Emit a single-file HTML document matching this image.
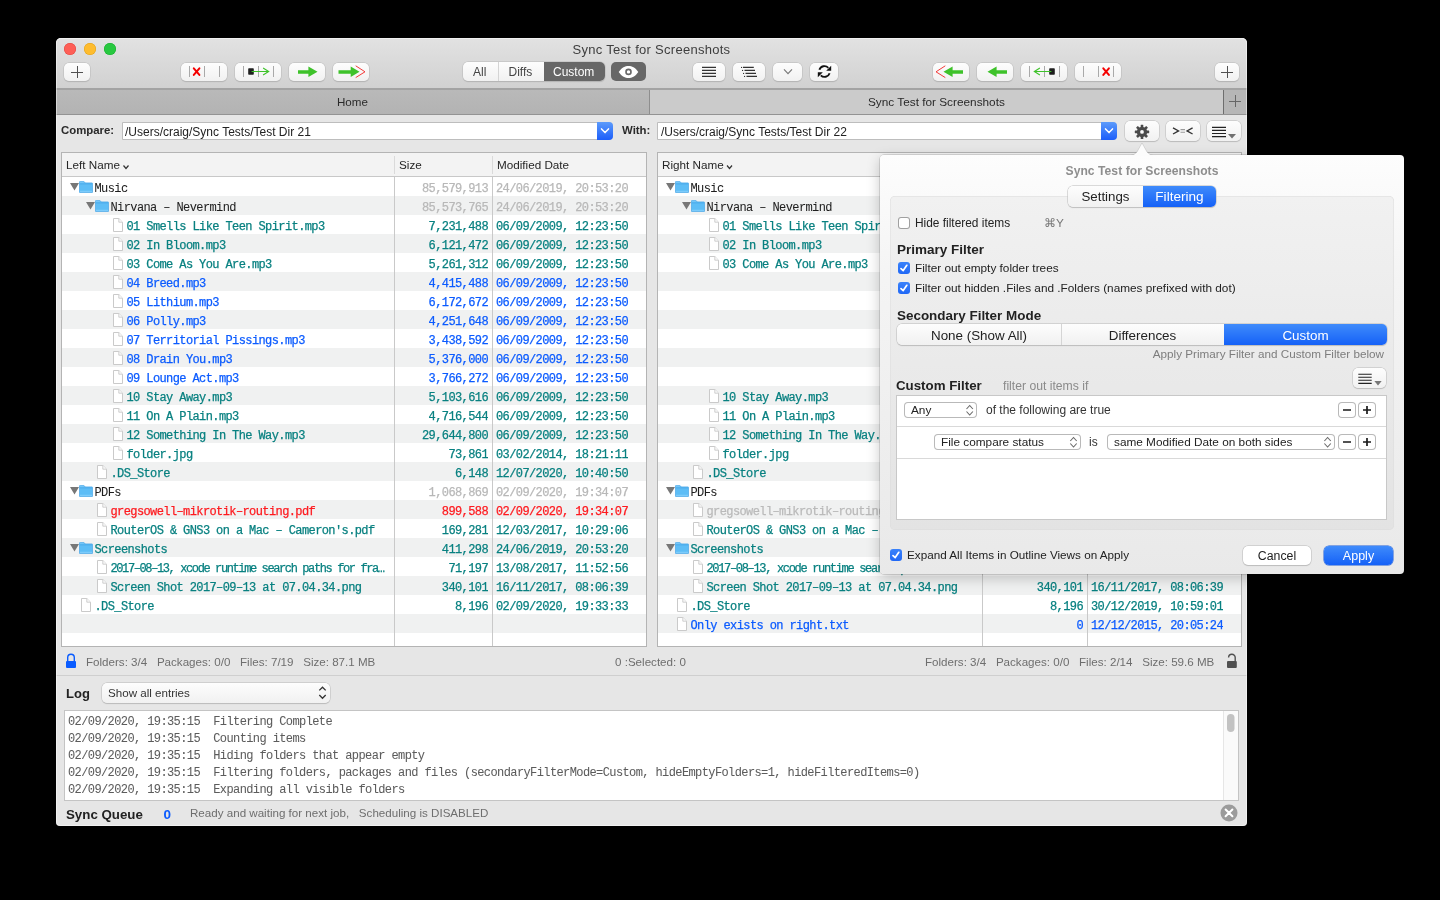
<!DOCTYPE html>
<html><head><meta charset="utf-8">
<style>
*{box-sizing:border-box;margin:0;padding:0}
html,body{width:1440px;height:900px;background:#000;overflow:hidden;font-family:"Liberation Sans",sans-serif;color:#222}
.a{position:absolute}
i{display:block;position:absolute;font-style:normal}
#win{position:absolute;left:56px;top:38px;width:1191px;height:788px;background:#e6e6e6;border-radius:5px 5px 4px 4px;overflow:hidden}
#tb{position:absolute;left:0;top:0;width:1191px;height:50px;background:linear-gradient(#e2e2e2,#d1d1d1)}
#tbline{position:absolute;left:0;top:50px;width:1191px;height:2px;background:#a3a3a3}
#tabs{position:absolute;left:0;top:52px;width:1191px;height:25px;background:#cbcbcb;border-bottom:1px solid #939393}
.tl{position:absolute;top:5px;width:12px;height:12px;border-radius:50%}
.title{position:absolute;left:0;width:1191px;top:3px;text-align:center;font-size:13px;letter-spacing:0.28px;color:#3e3e3e}
.btn{position:absolute;height:19px;border-radius:5px;background:linear-gradient(#fdfdfd,#f1f1f1);box-shadow:0 0 0 0.5px #bcbcbc,0 0.5px 1px rgba(0,0,0,0.18)}
.tbl{position:absolute;top:152px;height:495px;background:#fff;border:1px solid #b4b4b4;overflow:hidden}
.th{position:absolute;left:0;top:0;width:100%;height:24px;background:#f3f3f3;border-bottom:1px solid #c8c8c8}
.thl{position:absolute;top:4.5px;font-size:11.7px;color:#262626;white-space:nowrap}
.chev{font-size:10px;position:relative;top:1px}
.cdiv{top:3px;width:1px;height:18px;background:#dadada}
.tb{position:absolute;left:0;top:24px;width:100%;height:480px}
.row{position:absolute;left:0;width:100%;height:19px}
.vdiv{top:0;width:1px;height:480px;background:#c9c9c9}
.ico{position:absolute;line-height:0}
.nm{position:absolute;font-family:"Liberation Mono",monospace;font-size:12px;letter-spacing:-0.6px;line-height:19px;height:19px;white-space:nowrap;overflow:hidden;padding-top:2.5px;-webkit-text-stroke:0.25px}
.sz{text-align:right}
.st{position:absolute;font-size:11.6px;color:#6e6e6e;white-space:nowrap}
.chk{width:12px;height:12px;border-radius:3px;background:linear-gradient(#3a82fa,#2068f6);line-height:0}
.pop{background:#fff;border-radius:4px;box-shadow:inset 0 0 0 1px #b9b9b9}
.lbl{position:absolute;font-weight:bold;white-space:nowrap}
</style></head><body><div id="root" style="position:absolute;left:0;top:0;width:1440px;height:900px;will-change:transform">
<div id="win">
  <div id="tb"></div>
  <div id="tbline"></div>
  <div id="tabs">
    <div class="a" style="left:0;top:0;width:594px;height:24px;background:linear-gradient(#b9b9b9,#b3b3b3);border-right:1px solid #8e8e8e"></div>
    <div class="a" style="left:1167px;top:0;width:24px;height:24px;background:#b6b6b6;border-left:1px solid #6e6e6e"></div>
  </div>
</div>
<!-- traffic lights -->
<i class="tl" style="left:64px;top:43px;background:#fe5f57;box-shadow:inset 0 0 0 0.5px #e2463f"></i>
<i class="tl" style="left:84px;top:43px;background:#febc2e;box-shadow:inset 0 0 0 0.5px #e1a116"></i>
<i class="tl" style="left:104px;top:43px;background:#28c840;box-shadow:inset 0 0 0 0.5px #14ae2a"></i>
<div class="title" style="left:56px;top:42px">Sync Test for Screenshots</div>

<!-- toolbar buttons -->
<div class="btn" style="left:64px;top:63px;width:26px;height:18px"></div>
<div class="a" style="left:71px;top:71.5px;width:12px;height:1px;background:#505050"></div>
<div class="a" style="left:76.5px;top:66px;width:1px;height:12px;background:#505050"></div>

<div class="btn" style="left:181px;top:63px;width:46px;height:18px"></div>
<div class="btn" style="left:235px;top:63px;width:46px;height:18px"></div>
<div class="btn" style="left:289px;top:63px;width:36px;height:18px"></div>
<div class="btn" style="left:333px;top:63px;width:36px;height:18px"></div>

<div class="btn" style="left:933px;top:63px;width:36px;height:18px"></div>
<div class="btn" style="left:977px;top:63px;width:36px;height:18px"></div>
<div class="btn" style="left:1021px;top:63px;width:46px;height:18px"></div>
<div class="btn" style="left:1075px;top:63px;width:46px;height:18px"></div>

<div class="btn" style="left:1215px;top:63px;width:24px;height:18px"></div>
<div class="a" style="left:1221px;top:71.5px;width:12px;height:1px;background:#505050"></div>
<div class="a" style="left:1226.5px;top:66px;width:1px;height:12px;background:#505050"></div>

<!-- segmented -->
<div class="btn" style="left:463px;top:62px;width:142px;height:19px;overflow:hidden">
  <div class="a" style="left:35px;top:0;width:1px;height:19px;background:#d4d4d4"></div>
  <div class="a" style="left:81px;top:0;width:61px;height:19px;background:#676767"></div>
  <span class="a" style="left:10px;top:3px;font-size:12px;color:#444">All</span>
  <span class="a" style="left:45.5px;top:3px;font-size:12px;color:#444">Diffs</span>
  <span class="a" style="left:90px;top:3px;font-size:12px;color:#fff">Custom</span>
</div>
<div class="btn" style="left:611px;top:62px;width:35px;height:19px;background:#676767;box-shadow:none"></div>

<div class="btn" style="left:693px;top:63px;width:32px;height:18px"></div>
<div class="btn" style="left:733px;top:63px;width:32px;height:18px"></div>
<div class="btn" style="left:773px;top:63px;width:29px;height:18px"></div>
<div class="btn" style="left:810px;top:63px;width:28px;height:18px"></div>

<!-- tab labels -->
<span class="a" style="left:337px;top:95px;font-size:11.6px;color:#2a2a2a">Home</span>
<span class="a" style="left:868px;top:95px;font-size:11.8px;color:#2a2a2a">Sync Test for Screenshots</span>
<div class="a" style="left:1229px;top:101px;width:12px;height:1.2px;background:#666"></div>
<div class="a" style="left:1234.9px;top:95px;width:1.2px;height:12px;background:#666"></div>

<!-- compare row -->
<span class="lbl" style="left:61px;top:124px;font-size:11.4px;color:#2a2a2a">Compare:</span>
<div class="a" style="left:122px;top:122px;width:491px;height:18px;background:#fff;border:1px solid #bdbdbd;border-radius:0 4px 4px 0"></div>
<span class="a" style="left:125px;top:125px;font-size:12px;color:#222">/Users/craig/Sync Tests/Test Dir 21</span>
<div class="a" style="left:597px;top:122px;width:16px;height:18px;background:linear-gradient(#5c9bfb,#1c5efa);border-radius:0 4px 4px 0"></div>

<span class="lbl" style="left:622px;top:124px;font-size:11.4px;color:#2a2a2a">With:</span>
<div class="a" style="left:657px;top:122px;width:460px;height:18px;background:#fff;border:1px solid #bdbdbd;border-radius:0 4px 4px 0"></div>
<span class="a" style="left:661px;top:125px;font-size:12px;color:#222">/Users/craig/Sync Tests/Test Dir 22</span>
<div class="a" style="left:1101px;top:122px;width:16px;height:18px;background:linear-gradient(#5c9bfb,#1c5efa);border-radius:0 4px 4px 0"></div>

<div class="btn" style="left:1125px;top:121px;width:34px;height:20px"></div>
<div class="btn" style="left:1166px;top:121px;width:34px;height:20px"></div>
<div class="btn" style="left:1207px;top:121px;width:34px;height:20px"></div>

<div class="tbl" style="left:61px;width:586px">
<div class="th"><span class="thl" style="left:4px">Left Name</span><i class="cdiv" style="left:332px"></i><span class="thl" style="left:337px">Size</span><i class="cdiv" style="left:430px"></i><span class="thl" style="left:435px">Modified Date</span></div>
<div class="tb">
<div class="row" style="top:0px;background:#ffffff"></div>
<div class="row" style="top:19px;background:#f0f1f1"></div>
<div class="row" style="top:38px;background:#ffffff"></div>
<div class="row" style="top:57px;background:#f0f1f1"></div>
<div class="row" style="top:76px;background:#ffffff"></div>
<div class="row" style="top:95px;background:#f0f1f1"></div>
<div class="row" style="top:114px;background:#ffffff"></div>
<div class="row" style="top:133px;background:#f0f1f1"></div>
<div class="row" style="top:152px;background:#ffffff"></div>
<div class="row" style="top:171px;background:#f0f1f1"></div>
<div class="row" style="top:190px;background:#ffffff"></div>
<div class="row" style="top:209px;background:#f0f1f1"></div>
<div class="row" style="top:228px;background:#ffffff"></div>
<div class="row" style="top:247px;background:#f0f1f1"></div>
<div class="row" style="top:266px;background:#ffffff"></div>
<div class="row" style="top:285px;background:#f0f1f1"></div>
<div class="row" style="top:304px;background:#ffffff"></div>
<div class="row" style="top:323px;background:#f0f1f1"></div>
<div class="row" style="top:342px;background:#ffffff"></div>
<div class="row" style="top:361px;background:#f0f1f1"></div>
<div class="row" style="top:380px;background:#ffffff"></div>
<div class="row" style="top:399px;background:#f0f1f1"></div>
<div class="row" style="top:418px;background:#ffffff"></div>
<div class="row" style="top:437px;background:#f0f1f1"></div>
<div class="row" style="top:456px;background:#ffffff"></div>
<i class="vdiv" style="left:332px"></i><i class="vdiv" style="left:430px"></i>
<span class="ico" style="left:7.5px;top:6px"><svg width="9" height="8" viewBox="0 0 9 8"><path d="M0 0 L9 0 L4.5 7.5 Z" fill="#777"/></svg></span>
<span class="ico" style="left:16.5px;top:4px"><svg width="14" height="12" viewBox="0 0 14 12"><path d="M0.4 1.2 Q0.4 0.4 1.2 0.4 L4.6 0.4 Q5.1 0.4 5.5 1 L6 1.9 L13 1.9 Q13.6 1.9 13.6 2.6 L13.6 11 Q13.6 11.6 13 11.6 L1 11.6 Q0.4 11.6 0.4 11 Z" fill="#5dbdf6" stroke="#47a5e6" stroke-width="0.7"/><path d="M0.9 2.9 L13.1 2.9" stroke="#4aa8e8" stroke-width="0.8"/><path d="M1 1.3 L4.8 1.3" stroke="#8fd0fa" stroke-width="0.6"/><path d="M0.9 10.3 L13.1 10.3" stroke="#8ad3fd" stroke-width="0.9"/></svg></span>
<span class="nm" style="left:32.5px;top:0px;color:#1e1e1e;width:297.5px;-webkit-text-stroke:0.05px">Music</span>
<span class="nm sz" style="left:332px;width:94px;top:0px;color:#b8b8b8">85,579,913</span>
<span class="nm" style="left:434px;top:0px;color:#b8b8b8">24/06/2019, 20:53:20</span>
<span class="ico" style="left:23.5px;top:25px"><svg width="9" height="8" viewBox="0 0 9 8"><path d="M0 0 L9 0 L4.5 7.5 Z" fill="#777"/></svg></span>
<span class="ico" style="left:32.5px;top:23px"><svg width="14" height="12" viewBox="0 0 14 12"><path d="M0.4 1.2 Q0.4 0.4 1.2 0.4 L4.6 0.4 Q5.1 0.4 5.5 1 L6 1.9 L13 1.9 Q13.6 1.9 13.6 2.6 L13.6 11 Q13.6 11.6 13 11.6 L1 11.6 Q0.4 11.6 0.4 11 Z" fill="#5dbdf6" stroke="#47a5e6" stroke-width="0.7"/><path d="M0.9 2.9 L13.1 2.9" stroke="#4aa8e8" stroke-width="0.8"/><path d="M1 1.3 L4.8 1.3" stroke="#8fd0fa" stroke-width="0.6"/><path d="M0.9 10.3 L13.1 10.3" stroke="#8ad3fd" stroke-width="0.9"/></svg></span>
<span class="nm" style="left:48.5px;top:19px;color:#1e1e1e;width:281.5px;-webkit-text-stroke:0.05px">Nirvana – Nevermind</span>
<span class="nm sz" style="left:332px;width:94px;top:19px;color:#b8b8b8">85,573,765</span>
<span class="nm" style="left:434px;top:19px;color:#b8b8b8">24/06/2019, 20:53:20</span>
<span class="ico" style="left:50.5px;top:40.5px"><svg width="10" height="14" viewBox="0 0 10 14"><path d="M0.5 0.5 L5.8 0.5 L9.5 4.2 L9.5 13.5 L0.5 13.5 Z" fill="#fff" stroke="#c4c4c4" stroke-width="0.9"/><path d="M5.8 0.5 L5.8 4.2 L9.5 4.2" fill="#fafafa" stroke="#c4c4c4" stroke-width="0.8"/></svg></span>
<span class="nm" style="left:64.5px;top:38px;color:#088080;width:265.5px">01 Smells Like Teen Spirit.mp3</span>
<span class="nm sz" style="left:332px;width:94px;top:38px;color:#088080">7,231,488</span>
<span class="nm" style="left:434px;top:38px;color:#088080">06/09/2009, 12:23:50</span>
<span class="ico" style="left:50.5px;top:59.5px"><svg width="10" height="14" viewBox="0 0 10 14"><path d="M0.5 0.5 L5.8 0.5 L9.5 4.2 L9.5 13.5 L0.5 13.5 Z" fill="#fff" stroke="#c4c4c4" stroke-width="0.9"/><path d="M5.8 0.5 L5.8 4.2 L9.5 4.2" fill="#fafafa" stroke="#c4c4c4" stroke-width="0.8"/></svg></span>
<span class="nm" style="left:64.5px;top:57px;color:#088080;width:265.5px">02 In Bloom.mp3</span>
<span class="nm sz" style="left:332px;width:94px;top:57px;color:#088080">6,121,472</span>
<span class="nm" style="left:434px;top:57px;color:#088080">06/09/2009, 12:23:50</span>
<span class="ico" style="left:50.5px;top:78.5px"><svg width="10" height="14" viewBox="0 0 10 14"><path d="M0.5 0.5 L5.8 0.5 L9.5 4.2 L9.5 13.5 L0.5 13.5 Z" fill="#fff" stroke="#c4c4c4" stroke-width="0.9"/><path d="M5.8 0.5 L5.8 4.2 L9.5 4.2" fill="#fafafa" stroke="#c4c4c4" stroke-width="0.8"/></svg></span>
<span class="nm" style="left:64.5px;top:76px;color:#088080;width:265.5px">03 Come As You Are.mp3</span>
<span class="nm sz" style="left:332px;width:94px;top:76px;color:#088080">5,261,312</span>
<span class="nm" style="left:434px;top:76px;color:#088080">06/09/2009, 12:23:50</span>
<span class="ico" style="left:50.5px;top:97.5px"><svg width="10" height="14" viewBox="0 0 10 14"><path d="M0.5 0.5 L5.8 0.5 L9.5 4.2 L9.5 13.5 L0.5 13.5 Z" fill="#fff" stroke="#c4c4c4" stroke-width="0.9"/><path d="M5.8 0.5 L5.8 4.2 L9.5 4.2" fill="#fafafa" stroke="#c4c4c4" stroke-width="0.8"/></svg></span>
<span class="nm" style="left:64.5px;top:95px;color:#0b5bff;width:265.5px">04 Breed.mp3</span>
<span class="nm sz" style="left:332px;width:94px;top:95px;color:#0b5bff">4,415,488</span>
<span class="nm" style="left:434px;top:95px;color:#0b5bff">06/09/2009, 12:23:50</span>
<span class="ico" style="left:50.5px;top:116.5px"><svg width="10" height="14" viewBox="0 0 10 14"><path d="M0.5 0.5 L5.8 0.5 L9.5 4.2 L9.5 13.5 L0.5 13.5 Z" fill="#fff" stroke="#c4c4c4" stroke-width="0.9"/><path d="M5.8 0.5 L5.8 4.2 L9.5 4.2" fill="#fafafa" stroke="#c4c4c4" stroke-width="0.8"/></svg></span>
<span class="nm" style="left:64.5px;top:114px;color:#0b5bff;width:265.5px">05 Lithium.mp3</span>
<span class="nm sz" style="left:332px;width:94px;top:114px;color:#0b5bff">6,172,672</span>
<span class="nm" style="left:434px;top:114px;color:#0b5bff">06/09/2009, 12:23:50</span>
<span class="ico" style="left:50.5px;top:135.5px"><svg width="10" height="14" viewBox="0 0 10 14"><path d="M0.5 0.5 L5.8 0.5 L9.5 4.2 L9.5 13.5 L0.5 13.5 Z" fill="#fff" stroke="#c4c4c4" stroke-width="0.9"/><path d="M5.8 0.5 L5.8 4.2 L9.5 4.2" fill="#fafafa" stroke="#c4c4c4" stroke-width="0.8"/></svg></span>
<span class="nm" style="left:64.5px;top:133px;color:#0b5bff;width:265.5px">06 Polly.mp3</span>
<span class="nm sz" style="left:332px;width:94px;top:133px;color:#0b5bff">4,251,648</span>
<span class="nm" style="left:434px;top:133px;color:#0b5bff">06/09/2009, 12:23:50</span>
<span class="ico" style="left:50.5px;top:154.5px"><svg width="10" height="14" viewBox="0 0 10 14"><path d="M0.5 0.5 L5.8 0.5 L9.5 4.2 L9.5 13.5 L0.5 13.5 Z" fill="#fff" stroke="#c4c4c4" stroke-width="0.9"/><path d="M5.8 0.5 L5.8 4.2 L9.5 4.2" fill="#fafafa" stroke="#c4c4c4" stroke-width="0.8"/></svg></span>
<span class="nm" style="left:64.5px;top:152px;color:#0b5bff;width:265.5px">07 Territorial Pissings.mp3</span>
<span class="nm sz" style="left:332px;width:94px;top:152px;color:#0b5bff">3,438,592</span>
<span class="nm" style="left:434px;top:152px;color:#0b5bff">06/09/2009, 12:23:50</span>
<span class="ico" style="left:50.5px;top:173.5px"><svg width="10" height="14" viewBox="0 0 10 14"><path d="M0.5 0.5 L5.8 0.5 L9.5 4.2 L9.5 13.5 L0.5 13.5 Z" fill="#fff" stroke="#c4c4c4" stroke-width="0.9"/><path d="M5.8 0.5 L5.8 4.2 L9.5 4.2" fill="#fafafa" stroke="#c4c4c4" stroke-width="0.8"/></svg></span>
<span class="nm" style="left:64.5px;top:171px;color:#0b5bff;width:265.5px">08 Drain You.mp3</span>
<span class="nm sz" style="left:332px;width:94px;top:171px;color:#0b5bff">5,376,000</span>
<span class="nm" style="left:434px;top:171px;color:#0b5bff">06/09/2009, 12:23:50</span>
<span class="ico" style="left:50.5px;top:192.5px"><svg width="10" height="14" viewBox="0 0 10 14"><path d="M0.5 0.5 L5.8 0.5 L9.5 4.2 L9.5 13.5 L0.5 13.5 Z" fill="#fff" stroke="#c4c4c4" stroke-width="0.9"/><path d="M5.8 0.5 L5.8 4.2 L9.5 4.2" fill="#fafafa" stroke="#c4c4c4" stroke-width="0.8"/></svg></span>
<span class="nm" style="left:64.5px;top:190px;color:#0b5bff;width:265.5px">09 Lounge Act.mp3</span>
<span class="nm sz" style="left:332px;width:94px;top:190px;color:#0b5bff">3,766,272</span>
<span class="nm" style="left:434px;top:190px;color:#0b5bff">06/09/2009, 12:23:50</span>
<span class="ico" style="left:50.5px;top:211.5px"><svg width="10" height="14" viewBox="0 0 10 14"><path d="M0.5 0.5 L5.8 0.5 L9.5 4.2 L9.5 13.5 L0.5 13.5 Z" fill="#fff" stroke="#c4c4c4" stroke-width="0.9"/><path d="M5.8 0.5 L5.8 4.2 L9.5 4.2" fill="#fafafa" stroke="#c4c4c4" stroke-width="0.8"/></svg></span>
<span class="nm" style="left:64.5px;top:209px;color:#088080;width:265.5px">10 Stay Away.mp3</span>
<span class="nm sz" style="left:332px;width:94px;top:209px;color:#088080">5,103,616</span>
<span class="nm" style="left:434px;top:209px;color:#088080">06/09/2009, 12:23:50</span>
<span class="ico" style="left:50.5px;top:230.5px"><svg width="10" height="14" viewBox="0 0 10 14"><path d="M0.5 0.5 L5.8 0.5 L9.5 4.2 L9.5 13.5 L0.5 13.5 Z" fill="#fff" stroke="#c4c4c4" stroke-width="0.9"/><path d="M5.8 0.5 L5.8 4.2 L9.5 4.2" fill="#fafafa" stroke="#c4c4c4" stroke-width="0.8"/></svg></span>
<span class="nm" style="left:64.5px;top:228px;color:#088080;width:265.5px">11 On A Plain.mp3</span>
<span class="nm sz" style="left:332px;width:94px;top:228px;color:#088080">4,716,544</span>
<span class="nm" style="left:434px;top:228px;color:#088080">06/09/2009, 12:23:50</span>
<span class="ico" style="left:50.5px;top:249.5px"><svg width="10" height="14" viewBox="0 0 10 14"><path d="M0.5 0.5 L5.8 0.5 L9.5 4.2 L9.5 13.5 L0.5 13.5 Z" fill="#fff" stroke="#c4c4c4" stroke-width="0.9"/><path d="M5.8 0.5 L5.8 4.2 L9.5 4.2" fill="#fafafa" stroke="#c4c4c4" stroke-width="0.8"/></svg></span>
<span class="nm" style="left:64.5px;top:247px;color:#088080;width:265.5px">12 Something In The Way.mp3</span>
<span class="nm sz" style="left:332px;width:94px;top:247px;color:#088080">29,644,800</span>
<span class="nm" style="left:434px;top:247px;color:#088080">06/09/2009, 12:23:50</span>
<span class="ico" style="left:50.5px;top:268.5px"><svg width="10" height="14" viewBox="0 0 10 14"><path d="M0.5 0.5 L5.8 0.5 L9.5 4.2 L9.5 13.5 L0.5 13.5 Z" fill="#fff" stroke="#c4c4c4" stroke-width="0.9"/><path d="M5.8 0.5 L5.8 4.2 L9.5 4.2" fill="#fafafa" stroke="#c4c4c4" stroke-width="0.8"/></svg></span>
<span class="nm" style="left:64.5px;top:266px;color:#088080;width:265.5px">folder.jpg</span>
<span class="nm sz" style="left:332px;width:94px;top:266px;color:#088080">73,861</span>
<span class="nm" style="left:434px;top:266px;color:#088080">03/02/2014, 18:21:11</span>
<span class="ico" style="left:34.5px;top:287.5px"><svg width="10" height="14" viewBox="0 0 10 14"><path d="M0.5 0.5 L5.8 0.5 L9.5 4.2 L9.5 13.5 L0.5 13.5 Z" fill="#fff" stroke="#c4c4c4" stroke-width="0.9"/><path d="M5.8 0.5 L5.8 4.2 L9.5 4.2" fill="#fafafa" stroke="#c4c4c4" stroke-width="0.8"/></svg></span>
<span class="nm" style="left:48.5px;top:285px;color:#088080;width:281.5px">.DS_Store</span>
<span class="nm sz" style="left:332px;width:94px;top:285px;color:#088080">6,148</span>
<span class="nm" style="left:434px;top:285px;color:#088080">12/07/2020, 10:40:50</span>
<span class="ico" style="left:7.5px;top:310px"><svg width="9" height="8" viewBox="0 0 9 8"><path d="M0 0 L9 0 L4.5 7.5 Z" fill="#777"/></svg></span>
<span class="ico" style="left:16.5px;top:308px"><svg width="14" height="12" viewBox="0 0 14 12"><path d="M0.4 1.2 Q0.4 0.4 1.2 0.4 L4.6 0.4 Q5.1 0.4 5.5 1 L6 1.9 L13 1.9 Q13.6 1.9 13.6 2.6 L13.6 11 Q13.6 11.6 13 11.6 L1 11.6 Q0.4 11.6 0.4 11 Z" fill="#5dbdf6" stroke="#47a5e6" stroke-width="0.7"/><path d="M0.9 2.9 L13.1 2.9" stroke="#4aa8e8" stroke-width="0.8"/><path d="M1 1.3 L4.8 1.3" stroke="#8fd0fa" stroke-width="0.6"/><path d="M0.9 10.3 L13.1 10.3" stroke="#8ad3fd" stroke-width="0.9"/></svg></span>
<span class="nm" style="left:32.5px;top:304px;color:#1e1e1e;width:297.5px;-webkit-text-stroke:0.05px">PDFs</span>
<span class="nm sz" style="left:332px;width:94px;top:304px;color:#b8b8b8">1,068,869</span>
<span class="nm" style="left:434px;top:304px;color:#b8b8b8">02/09/2020, 19:34:07</span>
<span class="ico" style="left:34.5px;top:325.5px"><svg width="10" height="14" viewBox="0 0 10 14"><path d="M0.5 0.5 L5.8 0.5 L9.5 4.2 L9.5 13.5 L0.5 13.5 Z" fill="#fff" stroke="#c4c4c4" stroke-width="0.9"/><path d="M5.8 0.5 L5.8 4.2 L9.5 4.2" fill="#fafafa" stroke="#c4c4c4" stroke-width="0.8"/></svg></span>
<span class="nm" style="left:48.5px;top:323px;color:#fe1a1f;width:281.5px">gregsowell–mikrotik–routing.pdf</span>
<span class="nm sz" style="left:332px;width:94px;top:323px;color:#fe1a1f">899,588</span>
<span class="nm" style="left:434px;top:323px;color:#fe1a1f">02/09/2020, 19:34:07</span>
<span class="ico" style="left:34.5px;top:344.5px"><svg width="10" height="14" viewBox="0 0 10 14"><path d="M0.5 0.5 L5.8 0.5 L9.5 4.2 L9.5 13.5 L0.5 13.5 Z" fill="#fff" stroke="#c4c4c4" stroke-width="0.9"/><path d="M5.8 0.5 L5.8 4.2 L9.5 4.2" fill="#fafafa" stroke="#c4c4c4" stroke-width="0.8"/></svg></span>
<span class="nm" style="left:48.5px;top:342px;color:#088080;width:281.5px">RouterOS &amp; GNS3 on a Mac – Cameron's.pdf</span>
<span class="nm sz" style="left:332px;width:94px;top:342px;color:#088080">169,281</span>
<span class="nm" style="left:434px;top:342px;color:#088080">12/03/2017, 10:29:06</span>
<span class="ico" style="left:7.5px;top:367px"><svg width="9" height="8" viewBox="0 0 9 8"><path d="M0 0 L9 0 L4.5 7.5 Z" fill="#777"/></svg></span>
<span class="ico" style="left:16.5px;top:365px"><svg width="14" height="12" viewBox="0 0 14 12"><path d="M0.4 1.2 Q0.4 0.4 1.2 0.4 L4.6 0.4 Q5.1 0.4 5.5 1 L6 1.9 L13 1.9 Q13.6 1.9 13.6 2.6 L13.6 11 Q13.6 11.6 13 11.6 L1 11.6 Q0.4 11.6 0.4 11 Z" fill="#5dbdf6" stroke="#47a5e6" stroke-width="0.7"/><path d="M0.9 2.9 L13.1 2.9" stroke="#4aa8e8" stroke-width="0.8"/><path d="M1 1.3 L4.8 1.3" stroke="#8fd0fa" stroke-width="0.6"/><path d="M0.9 10.3 L13.1 10.3" stroke="#8ad3fd" stroke-width="0.9"/></svg></span>
<span class="nm" style="left:32.5px;top:361px;color:#088080;width:297.5px">Screenshots</span>
<span class="nm sz" style="left:332px;width:94px;top:361px;color:#088080">411,298</span>
<span class="nm" style="left:434px;top:361px;color:#088080">24/06/2019, 20:53:20</span>
<span class="ico" style="left:34.5px;top:382.5px"><svg width="10" height="14" viewBox="0 0 10 14"><path d="M0.5 0.5 L5.8 0.5 L9.5 4.2 L9.5 13.5 L0.5 13.5 Z" fill="#fff" stroke="#c4c4c4" stroke-width="0.9"/><path d="M5.8 0.5 L5.8 4.2 L9.5 4.2" fill="#fafafa" stroke="#c4c4c4" stroke-width="0.8"/></svg></span>
<span class="nm" style="left:48.5px;top:380px;color:#088080;width:281.5px"><span style="letter-spacing:-1.39px">2017–08–13, xcode runtime search paths for fra…</span></span>
<span class="nm sz" style="left:332px;width:94px;top:380px;color:#088080">71,197</span>
<span class="nm" style="left:434px;top:380px;color:#088080">13/08/2017, 11:52:56</span>
<span class="ico" style="left:34.5px;top:401.5px"><svg width="10" height="14" viewBox="0 0 10 14"><path d="M0.5 0.5 L5.8 0.5 L9.5 4.2 L9.5 13.5 L0.5 13.5 Z" fill="#fff" stroke="#c4c4c4" stroke-width="0.9"/><path d="M5.8 0.5 L5.8 4.2 L9.5 4.2" fill="#fafafa" stroke="#c4c4c4" stroke-width="0.8"/></svg></span>
<span class="nm" style="left:48.5px;top:399px;color:#088080;width:281.5px">Screen Shot 2017–09–13 at 07.04.34.png</span>
<span class="nm sz" style="left:332px;width:94px;top:399px;color:#088080">340,101</span>
<span class="nm" style="left:434px;top:399px;color:#088080">16/11/2017, 08:06:39</span>
<span class="ico" style="left:18.5px;top:420.5px"><svg width="10" height="14" viewBox="0 0 10 14"><path d="M0.5 0.5 L5.8 0.5 L9.5 4.2 L9.5 13.5 L0.5 13.5 Z" fill="#fff" stroke="#c4c4c4" stroke-width="0.9"/><path d="M5.8 0.5 L5.8 4.2 L9.5 4.2" fill="#fafafa" stroke="#c4c4c4" stroke-width="0.8"/></svg></span>
<span class="nm" style="left:32.5px;top:418px;color:#088080;width:297.5px">.DS_Store</span>
<span class="nm sz" style="left:332px;width:94px;top:418px;color:#088080">8,196</span>
<span class="nm" style="left:434px;top:418px;color:#088080">02/09/2020, 19:33:33</span>
</div></div>
<div class="tbl" style="left:657px;width:585px">
<div class="th"><span class="thl" style="left:4px">Right Name</span><i class="cdiv" style="left:324px"></i><span class="thl" style="left:329px">Size</span><i class="cdiv" style="left:429px"></i><span class="thl" style="left:434px">Modified Date</span></div>
<div class="tb">
<div class="row" style="top:0px;background:#ffffff"></div>
<div class="row" style="top:19px;background:#f0f1f1"></div>
<div class="row" style="top:38px;background:#ffffff"></div>
<div class="row" style="top:57px;background:#f0f1f1"></div>
<div class="row" style="top:76px;background:#ffffff"></div>
<div class="row" style="top:95px;background:#f0f1f1"></div>
<div class="row" style="top:114px;background:#ffffff"></div>
<div class="row" style="top:133px;background:#f0f1f1"></div>
<div class="row" style="top:152px;background:#ffffff"></div>
<div class="row" style="top:171px;background:#f0f1f1"></div>
<div class="row" style="top:190px;background:#ffffff"></div>
<div class="row" style="top:209px;background:#f0f1f1"></div>
<div class="row" style="top:228px;background:#ffffff"></div>
<div class="row" style="top:247px;background:#f0f1f1"></div>
<div class="row" style="top:266px;background:#ffffff"></div>
<div class="row" style="top:285px;background:#f0f1f1"></div>
<div class="row" style="top:304px;background:#ffffff"></div>
<div class="row" style="top:323px;background:#f0f1f1"></div>
<div class="row" style="top:342px;background:#ffffff"></div>
<div class="row" style="top:361px;background:#f0f1f1"></div>
<div class="row" style="top:380px;background:#ffffff"></div>
<div class="row" style="top:399px;background:#f0f1f1"></div>
<div class="row" style="top:418px;background:#ffffff"></div>
<div class="row" style="top:437px;background:#f0f1f1"></div>
<div class="row" style="top:456px;background:#ffffff"></div>
<i class="vdiv" style="left:324px"></i><i class="vdiv" style="left:429px"></i>
<span class="ico" style="left:7.5px;top:6px"><svg width="9" height="8" viewBox="0 0 9 8"><path d="M0 0 L9 0 L4.5 7.5 Z" fill="#777"/></svg></span>
<span class="ico" style="left:16.5px;top:4px"><svg width="14" height="12" viewBox="0 0 14 12"><path d="M0.4 1.2 Q0.4 0.4 1.2 0.4 L4.6 0.4 Q5.1 0.4 5.5 1 L6 1.9 L13 1.9 Q13.6 1.9 13.6 2.6 L13.6 11 Q13.6 11.6 13 11.6 L1 11.6 Q0.4 11.6 0.4 11 Z" fill="#5dbdf6" stroke="#47a5e6" stroke-width="0.7"/><path d="M0.9 2.9 L13.1 2.9" stroke="#4aa8e8" stroke-width="0.8"/><path d="M1 1.3 L4.8 1.3" stroke="#8fd0fa" stroke-width="0.6"/><path d="M0.9 10.3 L13.1 10.3" stroke="#8ad3fd" stroke-width="0.9"/></svg></span>
<span class="nm" style="left:32.5px;top:0px;color:#1e1e1e;width:289.5px;-webkit-text-stroke:0.05px">Music</span>
<span class="ico" style="left:23.5px;top:25px"><svg width="9" height="8" viewBox="0 0 9 8"><path d="M0 0 L9 0 L4.5 7.5 Z" fill="#777"/></svg></span>
<span class="ico" style="left:32.5px;top:23px"><svg width="14" height="12" viewBox="0 0 14 12"><path d="M0.4 1.2 Q0.4 0.4 1.2 0.4 L4.6 0.4 Q5.1 0.4 5.5 1 L6 1.9 L13 1.9 Q13.6 1.9 13.6 2.6 L13.6 11 Q13.6 11.6 13 11.6 L1 11.6 Q0.4 11.6 0.4 11 Z" fill="#5dbdf6" stroke="#47a5e6" stroke-width="0.7"/><path d="M0.9 2.9 L13.1 2.9" stroke="#4aa8e8" stroke-width="0.8"/><path d="M1 1.3 L4.8 1.3" stroke="#8fd0fa" stroke-width="0.6"/><path d="M0.9 10.3 L13.1 10.3" stroke="#8ad3fd" stroke-width="0.9"/></svg></span>
<span class="nm" style="left:48.5px;top:19px;color:#1e1e1e;width:273.5px;-webkit-text-stroke:0.05px">Nirvana – Nevermind</span>
<span class="ico" style="left:50.5px;top:40.5px"><svg width="10" height="14" viewBox="0 0 10 14"><path d="M0.5 0.5 L5.8 0.5 L9.5 4.2 L9.5 13.5 L0.5 13.5 Z" fill="#fff" stroke="#c4c4c4" stroke-width="0.9"/><path d="M5.8 0.5 L5.8 4.2 L9.5 4.2" fill="#fafafa" stroke="#c4c4c4" stroke-width="0.8"/></svg></span>
<span class="nm" style="left:64.5px;top:38px;color:#088080;width:257.5px">01 Smells Like Teen Spirit.mp3</span>
<span class="ico" style="left:50.5px;top:59.5px"><svg width="10" height="14" viewBox="0 0 10 14"><path d="M0.5 0.5 L5.8 0.5 L9.5 4.2 L9.5 13.5 L0.5 13.5 Z" fill="#fff" stroke="#c4c4c4" stroke-width="0.9"/><path d="M5.8 0.5 L5.8 4.2 L9.5 4.2" fill="#fafafa" stroke="#c4c4c4" stroke-width="0.8"/></svg></span>
<span class="nm" style="left:64.5px;top:57px;color:#088080;width:257.5px">02 In Bloom.mp3</span>
<span class="ico" style="left:50.5px;top:78.5px"><svg width="10" height="14" viewBox="0 0 10 14"><path d="M0.5 0.5 L5.8 0.5 L9.5 4.2 L9.5 13.5 L0.5 13.5 Z" fill="#fff" stroke="#c4c4c4" stroke-width="0.9"/><path d="M5.8 0.5 L5.8 4.2 L9.5 4.2" fill="#fafafa" stroke="#c4c4c4" stroke-width="0.8"/></svg></span>
<span class="nm" style="left:64.5px;top:76px;color:#088080;width:257.5px">03 Come As You Are.mp3</span>
<span class="ico" style="left:50.5px;top:211.5px"><svg width="10" height="14" viewBox="0 0 10 14"><path d="M0.5 0.5 L5.8 0.5 L9.5 4.2 L9.5 13.5 L0.5 13.5 Z" fill="#fff" stroke="#c4c4c4" stroke-width="0.9"/><path d="M5.8 0.5 L5.8 4.2 L9.5 4.2" fill="#fafafa" stroke="#c4c4c4" stroke-width="0.8"/></svg></span>
<span class="nm" style="left:64.5px;top:209px;color:#088080;width:257.5px">10 Stay Away.mp3</span>
<span class="ico" style="left:50.5px;top:230.5px"><svg width="10" height="14" viewBox="0 0 10 14"><path d="M0.5 0.5 L5.8 0.5 L9.5 4.2 L9.5 13.5 L0.5 13.5 Z" fill="#fff" stroke="#c4c4c4" stroke-width="0.9"/><path d="M5.8 0.5 L5.8 4.2 L9.5 4.2" fill="#fafafa" stroke="#c4c4c4" stroke-width="0.8"/></svg></span>
<span class="nm" style="left:64.5px;top:228px;color:#088080;width:257.5px">11 On A Plain.mp3</span>
<span class="ico" style="left:50.5px;top:249.5px"><svg width="10" height="14" viewBox="0 0 10 14"><path d="M0.5 0.5 L5.8 0.5 L9.5 4.2 L9.5 13.5 L0.5 13.5 Z" fill="#fff" stroke="#c4c4c4" stroke-width="0.9"/><path d="M5.8 0.5 L5.8 4.2 L9.5 4.2" fill="#fafafa" stroke="#c4c4c4" stroke-width="0.8"/></svg></span>
<span class="nm" style="left:64.5px;top:247px;color:#088080;width:257.5px">12 Something In The Way.mp3</span>
<span class="ico" style="left:50.5px;top:268.5px"><svg width="10" height="14" viewBox="0 0 10 14"><path d="M0.5 0.5 L5.8 0.5 L9.5 4.2 L9.5 13.5 L0.5 13.5 Z" fill="#fff" stroke="#c4c4c4" stroke-width="0.9"/><path d="M5.8 0.5 L5.8 4.2 L9.5 4.2" fill="#fafafa" stroke="#c4c4c4" stroke-width="0.8"/></svg></span>
<span class="nm" style="left:64.5px;top:266px;color:#088080;width:257.5px">folder.jpg</span>
<span class="ico" style="left:34.5px;top:287.5px"><svg width="10" height="14" viewBox="0 0 10 14"><path d="M0.5 0.5 L5.8 0.5 L9.5 4.2 L9.5 13.5 L0.5 13.5 Z" fill="#fff" stroke="#c4c4c4" stroke-width="0.9"/><path d="M5.8 0.5 L5.8 4.2 L9.5 4.2" fill="#fafafa" stroke="#c4c4c4" stroke-width="0.8"/></svg></span>
<span class="nm" style="left:48.5px;top:285px;color:#088080;width:273.5px">.DS_Store</span>
<span class="ico" style="left:7.5px;top:310px"><svg width="9" height="8" viewBox="0 0 9 8"><path d="M0 0 L9 0 L4.5 7.5 Z" fill="#777"/></svg></span>
<span class="ico" style="left:16.5px;top:308px"><svg width="14" height="12" viewBox="0 0 14 12"><path d="M0.4 1.2 Q0.4 0.4 1.2 0.4 L4.6 0.4 Q5.1 0.4 5.5 1 L6 1.9 L13 1.9 Q13.6 1.9 13.6 2.6 L13.6 11 Q13.6 11.6 13 11.6 L1 11.6 Q0.4 11.6 0.4 11 Z" fill="#5dbdf6" stroke="#47a5e6" stroke-width="0.7"/><path d="M0.9 2.9 L13.1 2.9" stroke="#4aa8e8" stroke-width="0.8"/><path d="M1 1.3 L4.8 1.3" stroke="#8fd0fa" stroke-width="0.6"/><path d="M0.9 10.3 L13.1 10.3" stroke="#8ad3fd" stroke-width="0.9"/></svg></span>
<span class="nm" style="left:32.5px;top:304px;color:#1e1e1e;width:289.5px;-webkit-text-stroke:0.05px">PDFs</span>
<span class="ico" style="left:34.5px;top:325.5px"><svg width="10" height="14" viewBox="0 0 10 14"><path d="M0.5 0.5 L5.8 0.5 L9.5 4.2 L9.5 13.5 L0.5 13.5 Z" fill="#fff" stroke="#c4c4c4" stroke-width="0.9"/><path d="M5.8 0.5 L5.8 4.2 L9.5 4.2" fill="#fafafa" stroke="#c4c4c4" stroke-width="0.8"/></svg></span>
<span class="nm" style="left:48.5px;top:323px;color:#bababa;width:273.5px">gregsowell–mikrotik–routing.pdf</span>
<span class="ico" style="left:34.5px;top:344.5px"><svg width="10" height="14" viewBox="0 0 10 14"><path d="M0.5 0.5 L5.8 0.5 L9.5 4.2 L9.5 13.5 L0.5 13.5 Z" fill="#fff" stroke="#c4c4c4" stroke-width="0.9"/><path d="M5.8 0.5 L5.8 4.2 L9.5 4.2" fill="#fafafa" stroke="#c4c4c4" stroke-width="0.8"/></svg></span>
<span class="nm" style="left:48.5px;top:342px;color:#088080;width:273.5px">RouterOS &amp; GNS3 on a Mac – Cameron's.pdf</span>
<span class="ico" style="left:7.5px;top:367px"><svg width="9" height="8" viewBox="0 0 9 8"><path d="M0 0 L9 0 L4.5 7.5 Z" fill="#777"/></svg></span>
<span class="ico" style="left:16.5px;top:365px"><svg width="14" height="12" viewBox="0 0 14 12"><path d="M0.4 1.2 Q0.4 0.4 1.2 0.4 L4.6 0.4 Q5.1 0.4 5.5 1 L6 1.9 L13 1.9 Q13.6 1.9 13.6 2.6 L13.6 11 Q13.6 11.6 13 11.6 L1 11.6 Q0.4 11.6 0.4 11 Z" fill="#5dbdf6" stroke="#47a5e6" stroke-width="0.7"/><path d="M0.9 2.9 L13.1 2.9" stroke="#4aa8e8" stroke-width="0.8"/><path d="M1 1.3 L4.8 1.3" stroke="#8fd0fa" stroke-width="0.6"/><path d="M0.9 10.3 L13.1 10.3" stroke="#8ad3fd" stroke-width="0.9"/></svg></span>
<span class="nm" style="left:32.5px;top:361px;color:#088080;width:289.5px">Screenshots</span>
<span class="ico" style="left:34.5px;top:382.5px"><svg width="10" height="14" viewBox="0 0 10 14"><path d="M0.5 0.5 L5.8 0.5 L9.5 4.2 L9.5 13.5 L0.5 13.5 Z" fill="#fff" stroke="#c4c4c4" stroke-width="0.9"/><path d="M5.8 0.5 L5.8 4.2 L9.5 4.2" fill="#fafafa" stroke="#c4c4c4" stroke-width="0.8"/></svg></span>
<span class="nm" style="left:48.5px;top:380px;color:#088080;width:273.5px"><span style="letter-spacing:-1.33px">2017–08–13, xcode runtime search paths for fr…</span></span>
<span class="ico" style="left:34.5px;top:401.5px"><svg width="10" height="14" viewBox="0 0 10 14"><path d="M0.5 0.5 L5.8 0.5 L9.5 4.2 L9.5 13.5 L0.5 13.5 Z" fill="#fff" stroke="#c4c4c4" stroke-width="0.9"/><path d="M5.8 0.5 L5.8 4.2 L9.5 4.2" fill="#fafafa" stroke="#c4c4c4" stroke-width="0.8"/></svg></span>
<span class="nm" style="left:48.5px;top:399px;color:#088080;width:273.5px">Screen Shot 2017–09–13 at 07.04.34.png</span>
<span class="nm sz" style="left:324px;width:101px;top:399px;color:#088080">340,101</span>
<span class="nm" style="left:433px;top:399px;color:#088080">16/11/2017, 08:06:39</span>
<span class="ico" style="left:18.5px;top:420.5px"><svg width="10" height="14" viewBox="0 0 10 14"><path d="M0.5 0.5 L5.8 0.5 L9.5 4.2 L9.5 13.5 L0.5 13.5 Z" fill="#fff" stroke="#c4c4c4" stroke-width="0.9"/><path d="M5.8 0.5 L5.8 4.2 L9.5 4.2" fill="#fafafa" stroke="#c4c4c4" stroke-width="0.8"/></svg></span>
<span class="nm" style="left:32.5px;top:418px;color:#088080;width:289.5px">.DS_Store</span>
<span class="nm sz" style="left:324px;width:101px;top:418px;color:#088080">8,196</span>
<span class="nm" style="left:433px;top:418px;color:#088080">30/12/2019, 10:59:01</span>
<span class="ico" style="left:18.5px;top:439.5px"><svg width="10" height="14" viewBox="0 0 10 14"><path d="M0.5 0.5 L5.8 0.5 L9.5 4.2 L9.5 13.5 L0.5 13.5 Z" fill="#fff" stroke="#c4c4c4" stroke-width="0.9"/><path d="M5.8 0.5 L5.8 4.2 L9.5 4.2" fill="#fafafa" stroke="#c4c4c4" stroke-width="0.8"/></svg></span>
<span class="nm" style="left:32.5px;top:437px;color:#0b5bff;width:289.5px">Only exists on right.txt</span>
<span class="nm sz" style="left:324px;width:101px;top:437px;color:#0b5bff">0</span>
<span class="nm" style="left:433px;top:437px;color:#0b5bff">12/12/2015, 20:05:24</span>
</div></div>

<!-- status bar -->
<span class="st" style="left:86px;top:655px">Folders: 3/4&nbsp;&nbsp;&nbsp;Packages: 0/0&nbsp;&nbsp;&nbsp;Files: 7/19&nbsp;&nbsp;&nbsp;Size: 87.1 MB</span>
<span class="st" style="left:615px;top:655px">0 :Selected: 0</span>
<span class="st" style="left:925px;top:655px">Folders: 3/4&nbsp;&nbsp;&nbsp;Packages: 0/0&nbsp;&nbsp;&nbsp;Files: 2/14&nbsp;&nbsp;&nbsp;Size: 59.6 MB</span>
<div class="a" style="left:56px;top:675px;width:1191px;height:1px;background:#cfcfcf"></div>

<!-- log -->
<span class="lbl" style="left:66px;top:686px;font-size:13px;color:#222">Log</span>
<div class="btn" style="left:102px;top:683px;width:228px;height:20px"></div>
<span class="a" style="left:108px;top:686px;font-size:11.6px;color:#333">Show all entries</span>
<div class="a" style="left:64px;top:710px;width:1175px;height:91px;background:#fff;border:1px solid #c4c4c4"></div>
<div class="a" style="left:68px;top:714px;font-family:'Liberation Mono',monospace;font-size:12px;letter-spacing:-0.6px;line-height:17px;color:#5c5c5c;white-space:pre;-webkit-text-stroke:0.05px">02/09/2020, 19:35:15  Filtering Complete
02/09/2020, 19:35:15  Counting items
02/09/2020, 19:35:15  Hiding folders that appear empty
02/09/2020, 19:35:15  Filtering folders, packages and files (secondaryFilterMode=Custom, hideEmptyFolders=1, hideFilteredItems=0)
02/09/2020, 19:35:15  Expanding all visible folders</div>

<!-- sync queue -->
<span class="lbl" style="left:66px;top:807px;font-size:13.3px;color:#222">Sync Queue</span>
<span class="lbl" style="left:163.5px;top:807px;font-size:13.5px;color:#0b5bff">0</span>
<span class="st" style="left:190px;top:806px">Ready and waiting for next job,&nbsp;&nbsp;&nbsp;Scheduling is DISABLED</span>


<svg class="a" style="left:0;top:0" width="1440" height="900" viewBox="0 0 1440 900">
<g stroke="#a9a9a9" stroke-width="1">
 <path d="M189.5 66V77M204.5 66V77M219.5 66V77"/>
 <path d="M243.5 66V77M258.5 66V77M273.5 66V77"/>
 <path d="M1029.5 66V77M1044.5 66V77M1059.5 66V77"/>
 <path d="M1083.5 66V77M1098.5 66V77M1113.5 66V77"/>
</g>
<g stroke="#f40000" stroke-width="2" stroke-linecap="round">
 <path d="M193.8 68.3L199.4 74.9M199.4 68.3L193.8 74.9"/>
 <path d="M1103.3 68.3L1108.9 74.9M1108.9 68.3L1103.3 74.9"/>
</g>
<rect x="248.2" y="68.3" width="5.6" height="6.4" rx="0.8" fill="#1e1e1e"/>
<rect x="1049.2" y="68.3" width="5.6" height="6.4" rx="0.8" fill="#1e1e1e"/>
<g stroke="#3ec22a" stroke-width="1.1" fill="none" stroke-linecap="round">
 <path d="M252 71.5H268.5M263.5 68.2L268.7 71.5L263.5 74.8"/>
 <path d="M1051 71.5H1034.5M1039.5 68.2L1034.3 71.5L1039.5 74.8"/>
</g>
<g fill="#3ec22a">
 <path d="M298 70.2H308.4V66.4L317.5 71.8L308.4 77V73.7H298Z"/>
 <path d="M338.5 70.2H350.7V66.4L359.5 71.8L350.7 77V73.7H338.5Z"/>
 <path d="M963 70.2H952.6V66.4L943.5 71.8L952.6 77V73.7H963Z"/>
 <path d="M1007 70.2H996.6V66.4L987.5 71.8L996.6 77V73.7H1007Z"/>
</g>
<g stroke="#f43a3a" stroke-width="1" fill="none">
 <path d="M355.7 65.8L365 71.8L355.7 77.6"/>
 <path d="M945.3 65.8L936 71.8L945.3 77.6"/>
</g>
<!-- eye -->
<path d="M618.7 71.9C622 67.2 625 65.9 628.5 65.9C632 65.9 635 67.2 638.3 71.9C635 76.6 632 77.9 628.5 77.9C625 77.9 622 76.6 618.7 71.9Z" fill="#fff"/>
<circle cx="628.5" cy="71.9" r="2.5" fill="none" stroke="#676767" stroke-width="1.6"/>
<!-- list icons -->
<g stroke="#333" stroke-width="1.1">
 <path d="M702 67.4H716M702 70.4H716M702 73.4H716M702 76.4H716"/>
 <path d="M743 67.4H753.8M744.5 70.4H755M745.5 73.4H756M746.5 76.4H757"/>
</g>
<g fill="#333">
 <rect x="741" y="66.9" width="1.1" height="1.1"/><rect x="742" y="69.9" width="1.1" height="1.1"/><rect x="743" y="72.9" width="1.1" height="1.1"/><rect x="744" y="75.9" width="1.1" height="1.1"/>
</g>
<path d="M784 69.3L788 73.6L792 69.3" stroke="#7a7a7a" stroke-width="1.2" fill="none"/>
<!-- refresh -->
<g stroke="#111" stroke-width="1.9" fill="none">
 <path d="M819.4 69.8A5.3 5.3 0 0 1 828.3 67.8"/>
 <path d="M829.6 73.2A5.3 5.3 0 0 1 820.8 75.3"/>
</g>
<path d="M826.2 70.7H831.2V65.7Z" fill="#111"/>
<path d="M817.8 72.3H822.8L817.8 77.3Z" fill="#111"/>
<!-- path dropdown chevrons -->
<g stroke="#fff" stroke-width="1.5" fill="none" stroke-linecap="round" stroke-linejoin="round">
 <path d="M601.5 128.9L605 132.6L608.5 128.9"/>
 <path d="M1105.5 128.9L1109 132.6L1112.5 128.9"/>
</g>
<!-- gear -->
<g transform="translate(1142 131.9)" fill="#4a4a4a">
 <circle r="5.2"/>
 <g id="teeth"><rect x="-1.3" y="-7.2" width="2.6" height="3" rx="0.4"/><rect x="-1.3" y="4.2" width="2.6" height="3" rx="0.4"/><rect x="-7.2" y="-1.3" width="3" height="2.6" rx="0.4"/><rect x="4.2" y="-1.3" width="3" height="2.6" rx="0.4"/></g>
 <g transform="rotate(45)"><rect x="-1.3" y="-7.2" width="2.6" height="3" rx="0.4"/><rect x="-1.3" y="4.2" width="2.6" height="3" rx="0.4"/><rect x="-7.2" y="-1.3" width="3" height="2.6" rx="0.4"/><rect x="4.2" y="-1.3" width="3" height="2.6" rx="0.4"/></g>
 <circle r="1.9" fill="#fafafa"/>
</g>
<!-- >=< -->
<g stroke="#333" stroke-width="1.3" fill="none">
 <path d="M1173 127.9L1178.6 130.9L1173 134"/>
 <path d="M1192.6 127.9L1187 130.9L1192.6 134"/>
</g>
<g stroke="#9a9a9a" stroke-width="1.1"><path d="M1180.5 129.6H1185M1180.5 132.3H1185"/></g>
<!-- menu btn -->
<g stroke="#222" stroke-width="1.1"><path d="M1212 127.4H1226M1212 130.4H1226M1212 133.5H1226M1212 136.6H1226"/></g>
<path d="M1228 134H1236L1232 138.5Z" fill="#707070"/>
<!-- header chevrons -->
<g stroke="#333" stroke-width="1.2" fill="none">
 <path d="M123.5 165.5L126 168.5L128.5 165.5"/>
 <path d="M727 165.5L729.5 168.5L732 165.5"/>
</g>
<!-- log scrollbar -->
<rect x="1223" y="711" width="15" height="89" fill="#fafafa"/>
<rect x="1223" y="711" width="1" height="89" fill="#e6e6e6"/>
<rect x="1227" y="714" width="7.5" height="18" rx="3.75" fill="#c2c2c2"/>
<!-- locks -->
<rect x="66" y="661" width="10" height="7" rx="1" fill="#0a5cff"/>
<path d="M67.7 661.5V657.6A3.3 3.3 0 0 1 74.3 657.6V661.5" stroke="#0a5cff" stroke-width="1.4" fill="none"/>
<rect x="1227" y="661" width="9.8" height="7" rx="1" fill="#505050"/>
<path d="M1235.2 661.5V657.6A3.3 3.3 0 0 0 1228.6 657.6" stroke="#505050" stroke-width="1.4" fill="none"/>
<!-- log select chevrons -->
<g stroke="#333" stroke-width="1.3" fill="none">
 <path d="M319.3 690.4L322.5 687.2L325.7 690.4M319.3 695L322.5 698.3L325.7 695"/>
</g>
<!-- close btn -->
<circle cx="1229" cy="812.9" r="8.5" fill="#9b9b9b"/>
<path d="M1225.6 809.5L1232.4 816.3M1232.4 809.5L1225.6 816.3" stroke="#fff" stroke-width="2" stroke-linecap="round"/>
<!--MOREICONS-->
</svg>

<div class="a" style="left:56px;top:38px;width:1191px;height:788px;border-radius:5px 5px 4px 4px;box-shadow:inset 0 0 0 1px rgba(255,255,255,0.45)"></div>
<!-- popover -->
<div class="a" style="left:880px;top:155px;width:524px;height:419px;background:linear-gradient(#fdfdfd,#f4f4f4 30%,#e9e9e9);border-radius:4px;box-shadow:0 0 0 0.5px rgba(0,0,0,0.22),0 4px 14px rgba(0,0,0,0.22)"></div>
<svg class="a" style="left:1128px;top:142px" width="28" height="14" viewBox="0 0 28 14"><path d="M0 14 Q6 14 9 10 L14 1 L19 10 Q22 14 28 14 Z" fill="#fcfcfc" stroke="rgba(0,0,0,0.18)" stroke-width="0.6"/><rect x="0" y="13" width="28" height="2" fill="#fcfcfc"/></svg>
<div class="a" style="left:880px;top:164px;width:524px;text-align:center;font-size:12.1px;font-weight:bold;color:#8e8e8e;letter-spacing:0.05px">Sync Test for Screenshots</div>
<div class="a" style="left:890px;top:196px;width:504px;height:334px;background:linear-gradient(#f1f1f1,#e3e3e3);border-radius:5px;box-shadow:inset 0 0 0 0.5px #dcdcdc"></div>
<!-- settings/filtering -->
<div class="btn" style="left:1068px;top:186px;width:148px;height:21px;overflow:hidden">
  <div class="a" style="left:75px;top:0;width:73px;height:21px;background:linear-gradient(#3f8bfb,#1561f7)"></div>
  <span class="a" style="left:0;width:75px;text-align:center;top:3px;font-size:13.3px;color:#222">Settings</span>
  <span class="a" style="left:75px;width:73px;text-align:center;top:3px;font-size:13.6px;color:#fff">Filtering</span>
</div>
<!-- hide filtered -->
<div class="a" style="left:898px;top:217px;width:12px;height:12px;background:#fff;border-radius:3px;box-shadow:inset 0 0 0 1px #a0a0a0"></div>
<span class="a" style="left:915px;top:216px;font-size:11.9px;color:#222">Hide filtered items</span>
<span class="a" style="left:1044px;top:216px;font-size:11.8px;color:#777">⌘Y</span>
<span class="lbl" style="left:897px;top:242px;font-size:13.5px;color:#222">Primary Filter</span>
<div class="a chk" style="left:898px;top:262px"><svg width="12" height="12" viewBox="0 0 12 12"><path d="M3 6.6L5.2 8.6L8.8 3.3" stroke="#fff" stroke-width="1.7" fill="none" stroke-linecap="round" stroke-linejoin="round"/></svg></div>
<span class="a" style="left:915px;top:261px;font-size:11.8px;color:#222">Filter out empty folder trees</span>
<div class="a chk" style="left:898px;top:282px"><svg width="12" height="12" viewBox="0 0 12 12"><path d="M3 6.6L5.2 8.6L8.8 3.3" stroke="#fff" stroke-width="1.7" fill="none" stroke-linecap="round" stroke-linejoin="round"/></svg></div>
<span class="a" style="left:915px;top:281px;font-size:11.8px;color:#222">Filter out hidden .Files and .Folders (names prefixed with dot)</span>
<span class="lbl" style="left:897px;top:308px;font-size:13.45px;color:#222">Secondary Filter Mode</span>
<!-- 3-seg -->
<div class="btn" style="left:897px;top:324px;width:490px;height:21px;overflow:hidden">
  <div class="a" style="left:164px;top:0;width:1px;height:21px;background:#d5d5d5"></div>
  <div class="a" style="left:327px;top:0;width:163px;height:21px;background:linear-gradient(#3f8bfb,#1561f7)"></div>
  <span class="a" style="left:0;width:164px;text-align:center;top:4px;font-size:13.4px;color:#222">None (Show All)</span>
  <span class="a" style="left:164px;width:163px;text-align:center;top:4px;font-size:13.4px;color:#222">Differences</span>
  <span class="a" style="left:327px;width:163px;text-align:center;top:4px;font-size:13.4px;color:#fff">Custom</span>
</div>
<span class="a" style="left:1050px;width:334px;text-align:right;top:347px;font-size:11.7px;color:#7d7d7d">Apply Primary Filter and Custom Filter below</span>
<div class="btn" style="left:1353px;top:368px;width:33px;height:20px"></div>
<span class="lbl" style="left:896px;top:378px;font-size:13.3px;color:#222">Custom Filter</span>
<span class="a" style="left:1003px;top:379px;font-size:12.2px;color:#8a8a8a">filter out items if</span>
<div class="a" style="left:896px;top:395px;width:491px;height:125px;background:#fff;border:1px solid #c8c8c8"></div>
<div class="a" style="left:897px;top:426px;width:489px;height:1px;background:#d9d9d9"></div>
<div class="a" style="left:897px;top:458px;width:489px;height:1px;background:#d9d9d9"></div>
<div class="a pop" style="left:904px;top:402px;width:73px;height:16px"></div>
<span class="a" style="left:911px;top:403px;font-size:11.8px;color:#222">Any</span>
<span class="a" style="left:986px;top:403px;font-size:12px;color:#333">of the following are true</span>
<div class="a pop" style="left:934px;top:434px;width:147px;height:16px"></div>
<span class="a" style="left:941px;top:435px;font-size:11.8px;color:#222">File compare status</span>
<span class="a" style="left:1089px;top:435px;font-size:12px;color:#333">is</span>
<div class="a pop" style="left:1107px;top:434px;width:228px;height:16px"></div>
<span class="a" style="left:1114px;top:435px;font-size:11.8px;color:#222">same Modified Date on both sides</span>
<div class="a pop" style="left:1338px;top:402px;width:18px;height:16px"></div>
<div class="a pop" style="left:1358px;top:402px;width:18px;height:16px"></div>
<div class="a pop" style="left:1338px;top:434px;width:18px;height:16px"></div>
<div class="a pop" style="left:1358px;top:434px;width:18px;height:16px"></div>
<svg class="a" style="left:0;top:0" width="1440" height="900">
 <g stroke="#6a6a6a" stroke-width="1.1" fill="none">
  <path d="M966.5 409L969.7 405.5L972.9 409M966.5 411.5L969.7 415L972.9 411.5"/>
  <path d="M1070.3 441L1073.5 437.5L1076.7 441M1070.3 443.5L1073.5 447L1076.7 443.5"/>
  <path d="M1324.4 441L1327.6 437.5L1330.8 441M1324.4 443.5L1327.6 447L1330.8 443.5"/>
 </g>
 <g stroke="#1a1a1a" stroke-width="1.7">
  <path d="M1343 410H1351M1363 410H1371M1367 406V414"/>
  <path d="M1343 442H1351M1363 442H1371M1367 438V446"/>
 </g>
 <g stroke="#222" stroke-width="1.1"><path d="M1358.3 374.2H1371.7M1358.3 377.2H1371.7M1358.3 380.3H1371.7M1358.3 383.4H1371.7"/></g>
 <path d="M1374.4 381H1381.7L1378 385.5Z" fill="#777"/>
</svg>
<!-- bottom -->
<div class="a chk" style="left:890px;top:549px"><svg width="12" height="12" viewBox="0 0 12 12"><path d="M3 6.6L5.2 8.6L8.8 3.3" stroke="#fff" stroke-width="1.7" fill="none" stroke-linecap="round" stroke-linejoin="round"/></svg></div>
<span class="a" style="left:907px;top:548px;font-size:11.7px;color:#222">Expand All Items in Outline Views on Apply</span>
<div class="btn" style="left:1243px;top:546px;width:68px;height:19px;background:#fff"></div>
<span class="a" style="left:1243px;width:68px;text-align:center;top:549px;font-size:12.3px;color:#222">Cancel</span>
<div class="btn" style="left:1324px;top:546px;width:69px;height:19px;background:linear-gradient(#3f8bfb,#1561f7);box-shadow:0 0 0 0.5px #1a5ad8"></div>
<span class="a" style="left:1324px;width:69px;text-align:center;top:549px;font-size:12.5px;color:#fff">Apply</span>

</div></body></html>
